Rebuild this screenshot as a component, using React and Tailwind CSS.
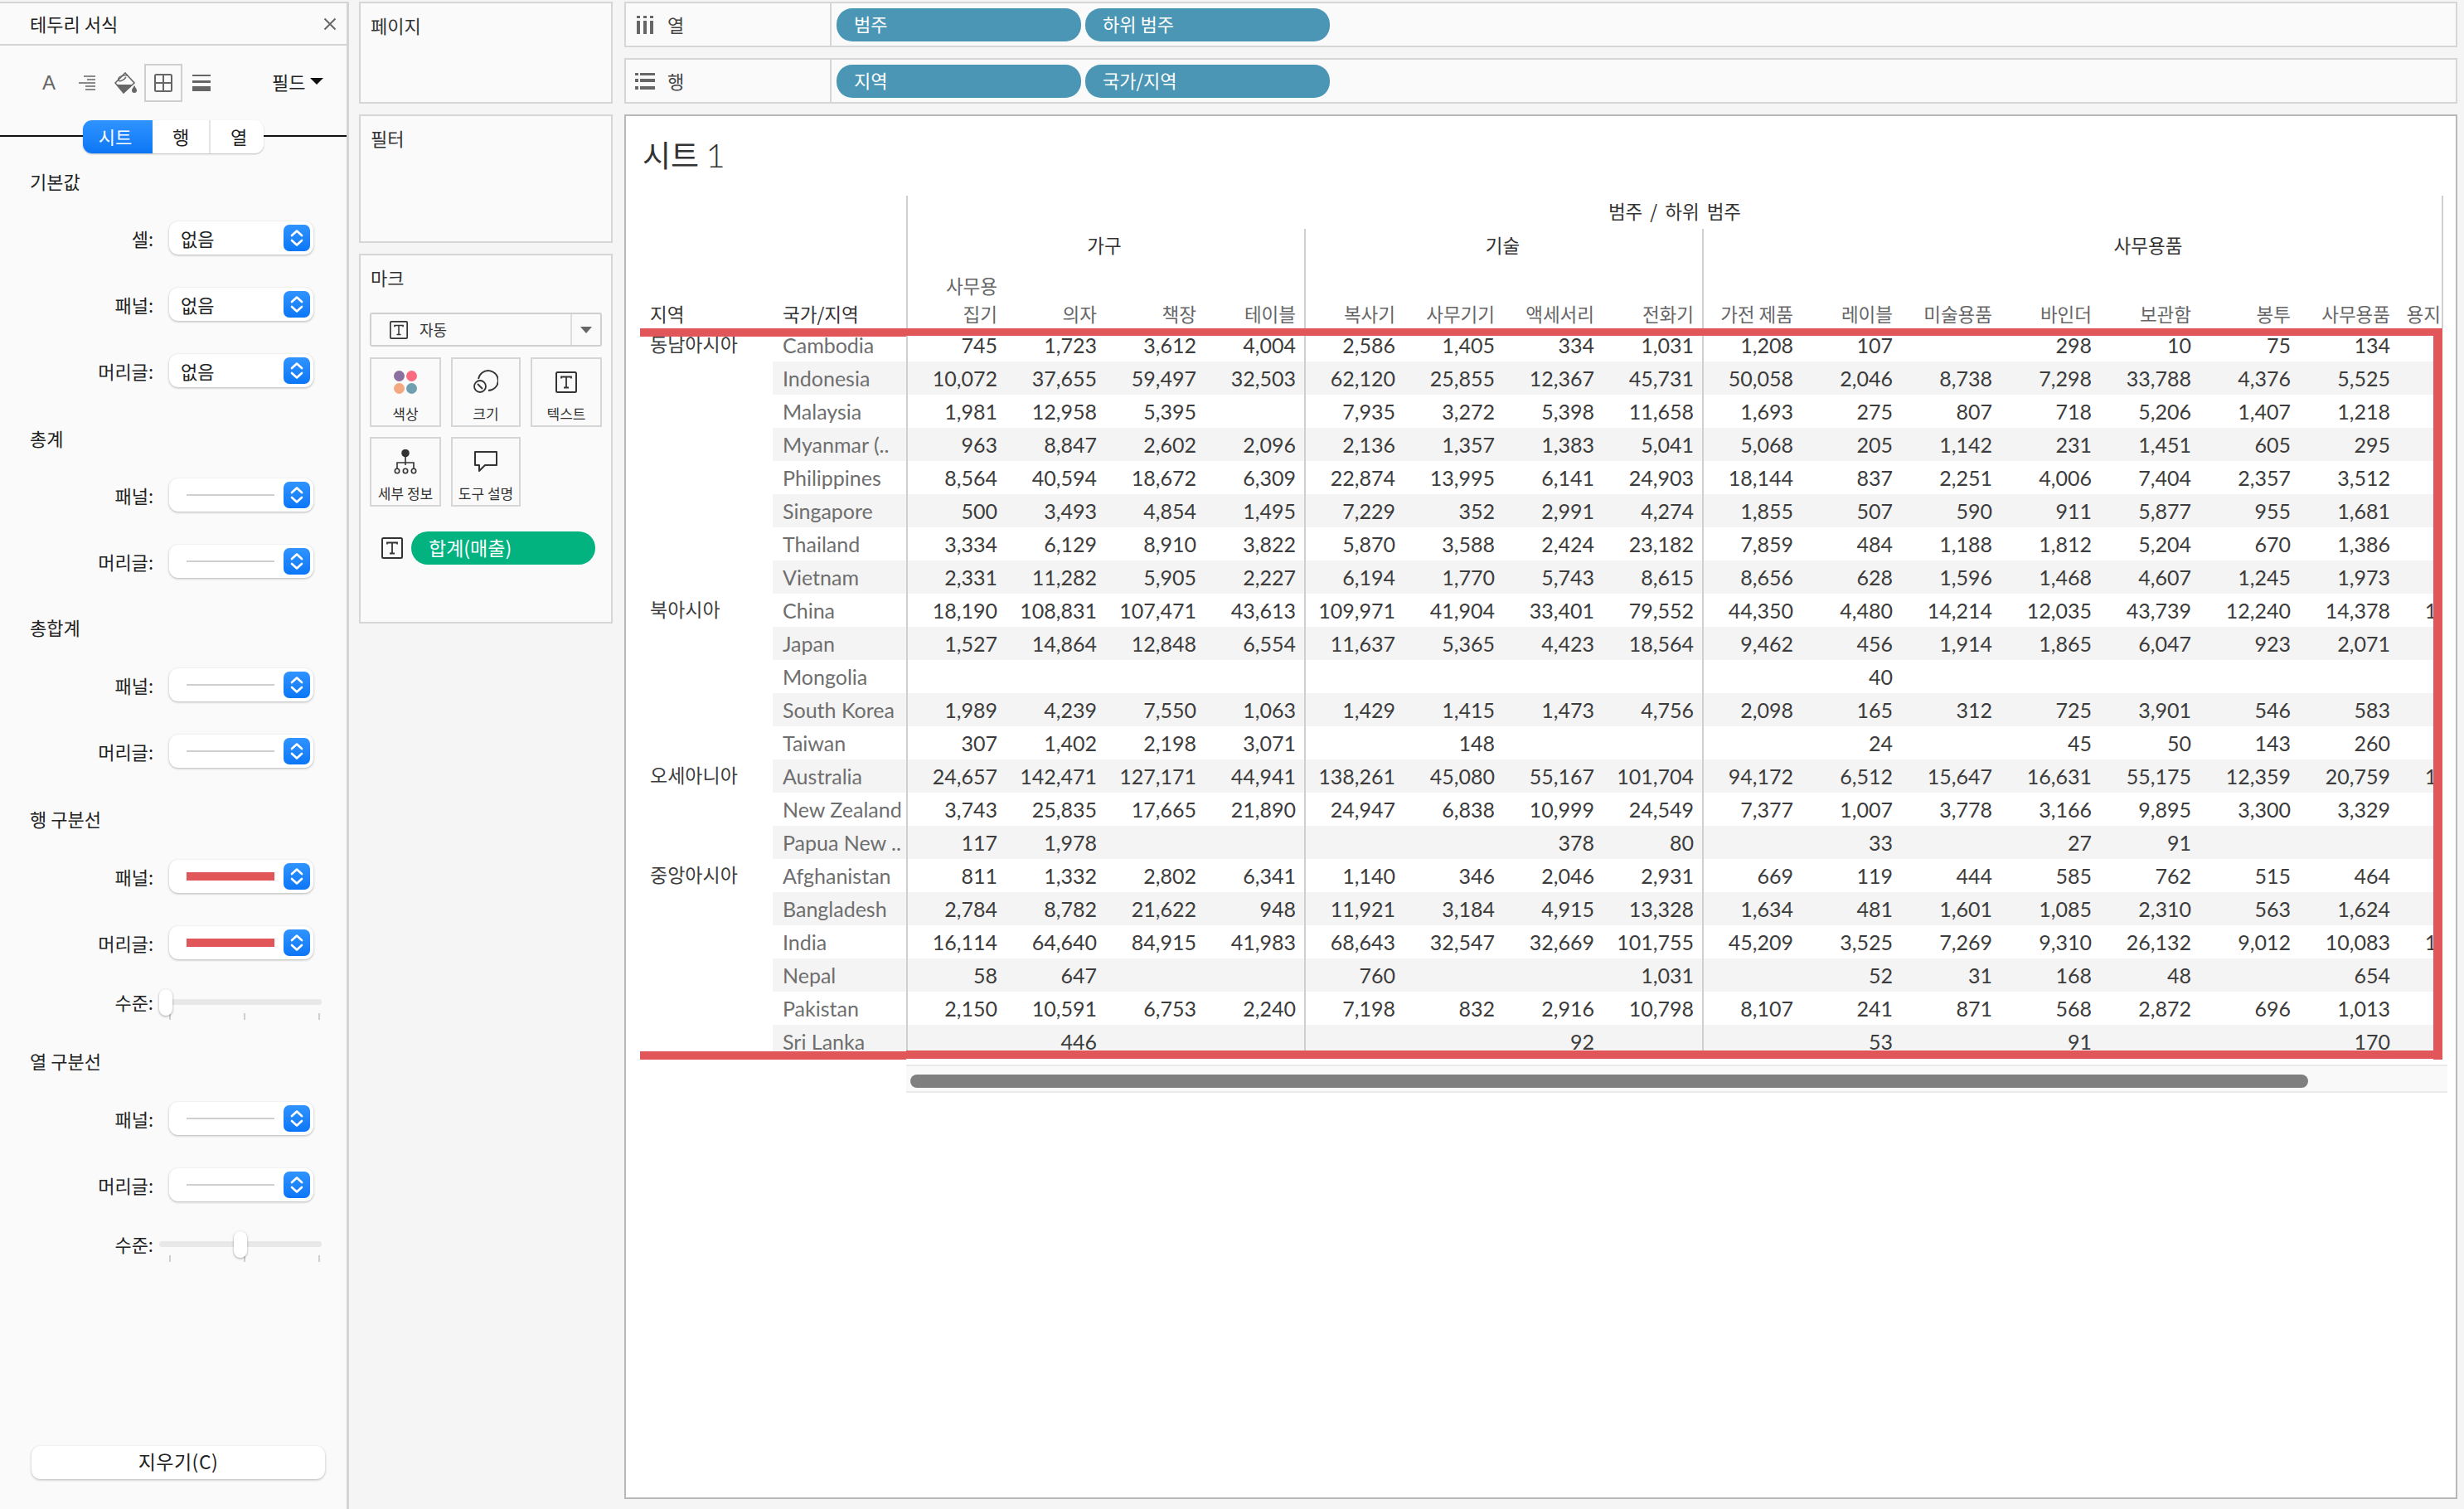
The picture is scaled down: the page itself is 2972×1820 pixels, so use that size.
const COLS = ["사무용\n집기", "의자", "책장", "테이블", "복사기", "사무기기", "액세서리", "전화기", "가전 제품", "레이블", "미술용품", "바인더", "보관함", "봉투", "사무용품"];

const ROWS = [
  ["동남아시아", "Cambodia", "745 1,723 3,612 4,004 2,586 1,405 334 1,031 1,208 107 - 298 10 75 134 -"],
  ["", "Indonesia", "10,072 37,655 59,497 32,503 62,120 25,855 12,367 45,731 50,058 2,046 8,738 7,298 33,788 4,376 5,525 5,100"],
  ["", "Malaysia", "1,981 12,958 5,395 - 7,935 3,272 5,398 11,658 1,693 275 807 718 5,206 1,407 1,218 -"],
  ["", "Myanmar (..", "963 8,847 2,602 2,096 2,136 1,357 1,383 5,041 5,068 205 1,142 231 1,451 605 295 -"],
  ["", "Philippines", "8,564 40,594 18,672 6,309 22,874 13,995 6,141 24,903 18,144 837 2,251 4,006 7,404 2,357 3,512 3,100"],
  ["", "Singapore", "500 3,493 4,854 1,495 7,229 352 2,991 4,274 1,855 507 590 911 5,877 955 1,681 1,100"],
  ["", "Thailand", "3,334 6,129 8,910 3,822 5,870 3,588 2,424 23,182 7,859 484 1,188 1,812 5,204 670 1,386 -"],
  ["", "Vietnam", "2,331 11,282 5,905 2,227 6,194 1,770 5,743 8,615 8,656 628 1,596 1,468 4,607 1,245 1,973 1,100"],
  ["북아시아", "China", "18,190 108,831 107,471 43,613 109,971 41,904 33,401 79,552 44,350 4,480 14,214 12,035 43,739 12,240 14,378 13,100"],
  ["", "Japan", "1,527 14,864 12,848 6,554 11,637 5,365 4,423 18,564 9,462 456 1,914 1,865 6,047 923 2,071 -"],
  ["", "Mongolia", "- - - - - - - - - 40 - - - - - -"],
  ["", "South Korea", "1,989 4,239 7,550 1,063 1,429 1,415 1,473 4,756 2,098 165 312 725 3,901 546 583 -"],
  ["", "Taiwan", "307 1,402 2,198 3,071 - 148 - - - 24 - 45 50 143 260 -"],
  ["오세아니아", "Australia", "24,657 142,471 127,171 44,941 138,261 45,080 55,167 101,704 94,172 6,512 15,647 16,631 55,175 12,359 20,759 13,100"],
  ["", "New Zealand", "3,743 25,835 17,665 21,890 24,947 6,838 10,999 24,549 7,377 1,007 3,778 3,166 9,895 3,300 3,329 3,100"],
  ["", "Papua New ..", "117 1,978 - - - - 378 80 - 33 - 27 91 - - -"],
  ["중앙아시아", "Afghanistan", "811 1,332 2,802 6,341 1,140 346 2,046 2,931 669 119 444 585 762 515 464 -"],
  ["", "Bangladesh", "2,784 8,782 21,622 948 11,921 3,184 4,915 13,328 1,634 481 1,601 1,085 2,310 563 1,624 1,100"],
  ["", "India", "16,114 64,640 84,915 41,983 68,643 32,547 32,669 101,755 45,209 3,525 7,269 9,310 26,132 9,012 10,083 13,100"],
  ["", "Nepal", "58 647 - - 760 - - 1,031 - 52 31 168 48 - 654 -"],
  ["", "Pakistan", "2,150 10,591 6,753 2,240 7,198 832 2,916 10,798 8,107 241 871 568 2,872 696 1,013 -"],
  ["", "Sri Lanka", "- 446 - - - - 92 - - 53 - 91 - - 170 -"],
];

function Stepper() {
  return (
    <div className="w-[32px] h-[32px] rounded-[7px] bg-gradient-to-b from-[#2f94ff] to-[#0a76f6] flex items-center justify-center">
      <svg width="20" height="24" viewBox="0 0 20 24" fill="none" stroke="white" strokeWidth="2.6" strokeLinecap="round" strokeLinejoin="round">
        <path d="M4 9 L10 3.5 L16 9" />
        <path d="M4 15 L10 20.5 L16 15" />
      </svg>
    </div>
  );
}

function Select({ label, value, line }) {
  return (
    <div className="h-[80px] flex items-center">
      <div className="w-[185px] text-right text-[22px] text-[#222]">{label}:</div>
      <div className="ml-[19px] w-[174px] h-[40px] bg-white rounded-[11px] shadow-[0_1px_3px_rgba(0,0,0,0.28)] flex items-center justify-between pr-[4px]">
        {value && <span className="pl-[14px] text-[22px] text-[#222]">{value}</span>}
        {line === "none" && <span className="ml-[21px] w-[106px] h-[2px] bg-[#cfcfcf]" />}
        {line === "red" && <span className="ml-[21px] w-[106px] h-[10px] bg-[#e15759]" />}
        <Stepper />
      </div>
    </div>
  );
}

function Level({ thumb }) {
  return (
    <div className="h-[64px] flex items-center">
      <div className="w-[185px] text-right text-[22px] text-[#222] pb-[2px]">수준:</div>
      <div className="relative ml-[7px] w-[196px] h-[32px]">
        <div className="absolute left-0 right-0 top-[12px] h-[7px] rounded-full bg-[#e8e8e8]" />
        <div className="absolute top-[29px] left-[12px] w-[2px] h-[8px] bg-[#cfcfcf]" />
        <div className="absolute top-[29px] left-[102px] w-[2px] h-[8px] bg-[#cfcfcf]" />
        <div className="absolute top-[29px] left-[192px] w-[2px] h-[8px] bg-[#cfcfcf]" />
        <div className={`absolute top-0 ${thumb} w-[16px] h-[32px] rounded-[8px] bg-white shadow-[0_1px_3px_rgba(0,0,0,0.35)]`} />
      </div>
    </div>
  );
}

function SectionTitle({ children, className }) {
  return <div className={`h-[40px] pl-[36px] pb-[3px] flex items-center text-[22px] text-[#222] ${className}`}>{children}</div>;
}

function TIcon({ size = 26 }) {
  return (
    <svg width={size} height={size} viewBox="0 0 26 26" fill="none" stroke="#333" strokeWidth="2">
      <rect x="1" y="1" width="24" height="24" rx="1.5" />
      <path d="M7 8.5 V6.5 H19 V8.5 M13 6.5 V19.5 M10 19.5 H16" strokeWidth="1.8" />
    </svg>
  );
}

function MarkButton({ icon, label, className }) {
  return (
    <div className={`h-[84px] border-2 border-[#d6d6d6] flex flex-col items-center pt-[14px] ${className}`}>
      <div className="h-[28px] flex items-center justify-center">{icon}</div>
      <div className="mt-[14px] text-[17px] leading-[20px] text-[#333] whitespace-nowrap">{label}</div>
    </div>
  );
}

function FormatPanel() {
  return (
    <div className="w-[421px] h-[1818px] shrink-0 bg-[#fafafa] border-t-2 border-r-[3px] border-[#d4d4d4] flex flex-col">
      <div className="h-[51px] shrink-0 border-b-2 border-[#d4d4d4] flex items-center justify-between pl-[36px] pr-[12px]">
        <span className="text-[22px] text-[#222]">테두리 서식</span>
        <svg width="16" height="16" viewBox="0 0 16 16" stroke="#666" strokeWidth="2" fill="none">
          <path d="M1.5 1.5 L14.5 14.5 M14.5 1.5 L1.5 14.5" />
        </svg>
      </div>

      <div className="h-[90px] shrink-0 flex items-center pl-[52px]">
        <span className="w-[14px] text-[24px] leading-none text-[#666] font-['Liberation_Sans',sans-serif] flex justify-center">A</span>
        <svg className="ml-[29px]" width="20" height="18" viewBox="0 0 20 18" stroke="#666" strokeWidth="1.6">
          <path d="M6 1 H20 M10 5 H20 M0 9 H20 M8 13 H20 M8 17 H20" />
        </svg>
        <svg className="ml-[23px]" width="28" height="26" viewBox="0 0 28 26" fill="none">
          <path d="M1 13 L13 1 L24 13 L11 25 Z" stroke="#666" strokeWidth="1.6" />
          <path d="M3 15 H22 L11 25 Z" fill="#666" />
          <path d="M16 4 C8 3 3 7 5 10 C7 12 12 9 14 6" stroke="#666" strokeWidth="1.4" />
          <path d="M24 16 C25.5 19 27 20 27 22 A3 3 0 0 1 21 22 C21 20 22.5 19 24 16 Z" fill="#666" />
        </svg>
        <div className="ml-[8px] w-[46px] h-[46px] border-2 border-[#cfcfcf] flex items-center justify-center">
          <svg width="22" height="22" viewBox="0 0 22 22" fill="none" stroke="#666" strokeWidth="2">
            <rect x="1" y="1" width="20" height="20" rx="1.5" />
            <path d="M11 1 V21 M1 11 H21" />
          </svg>
        </div>
        <svg className="ml-[12px]" width="22" height="20" viewBox="0 0 22 20" fill="#666">
          <rect x="0" y="0" width="22" height="2" />
          <rect x="0" y="7" width="22" height="3" />
          <rect x="0" y="14" width="22" height="6" />
        </svg>
        <span className="ml-[74px] mb-[4px] text-[22px] text-[#222]">필드</span>
        <span className="ml-[6px] mb-[4px] w-0 h-0 border-x-[8px] border-x-transparent border-t-[8px] border-t-[#111]" />
      </div>

      <div className="relative h-[40px] shrink-0 flex justify-center">
        <div className="absolute left-0 right-0 top-[18px] h-[2px] bg-[#111]" />
        <div className="relative flex w-[218px] rounded-[11px] overflow-hidden bg-white shadow-[0_1px_2px_rgba(0,0,0,0.25)] text-[22px] text-[#222]">
          <div className="w-[84px] pr-[6px] pb-[2px] flex items-center justify-center text-white bg-gradient-to-b from-[#2f94ff] to-[#0a76f6]">시트</div>
          <div className="w-[68px] pb-[2px] flex items-center justify-center">행</div>
          <div className="w-[66px] pl-[4px] pb-[2px] flex items-center justify-center border-l-2 border-[#e4e4e4]">열</div>
        </div>
      </div>

      <SectionTitle className="mt-[15px]">기본값</SectionTitle>
      <div className="mt-[7px]">
        <Select label="셀" value="없음" />
        <Select label="패널" value="없음" />
        <Select label="머리글" value="없음" />
      </div>

      <SectionTitle className="mt-[23px]">총계</SectionTitle>
      <div className="mt-[7px]">
        <Select label="패널" line="none" />
        <Select label="머리글" line="none" />
      </div>

      <SectionTitle className="mt-[21px]">총합계</SectionTitle>
      <div className="mt-[8px]">
        <Select label="패널" line="none" />
        <Select label="머리글" line="none" />
      </div>

      <SectionTitle className="mt-[23px]">행 구분선</SectionTitle>
      <div className="mt-[8px]">
        <Select label="패널" line="red" />
        <Select label="머리글" line="red" />
        <Level thumb="left-0" />
      </div>

      <SectionTitle className="mt-[20px]">열 구분선</SectionTitle>
      <div className="mt-[8px]">
        <Select label="패널" line="none" />
        <Select label="머리글" line="none" />
        <Level thumb="left-[90px]" />
      </div>

      <div className="flex-1" />
      <div className="ml-[38px] mb-[36px] w-[354px] h-[40px] pb-[4px] rounded-[11px] bg-white shadow-[0_1px_3px_rgba(0,0,0,0.28)] flex items-center justify-center text-[23px] tracking-[0.5px] text-[#222]">
        지우기(C)
      </div>
    </div>
  );
}

function CardsPanel() {
  return (
    <div className="ml-[12px] w-[306px] shrink-0 flex flex-col gap-[13px] text-[22px] text-[#333]">
      <div className="h-[123px] border-2 border-[#d6d6d6] bg-[#fafafa] px-[12px] pt-[12px] leading-[28px]">페이지</div>
      <div className="h-[155px] border-2 border-[#d6d6d6] bg-[#fafafa] px-[12px] pt-[12px] leading-[28px]">필터</div>
      <div className="h-[446px] border-2 border-[#d6d6d6] bg-[#fafafa] px-[11px] pt-[12px]">
        <div className="pl-[1px] leading-[28px]">마크</div>
        <div className="mt-[29px] h-[41px] w-[280px] border-2 border-[#d0d0d0] rounded-[3px] flex items-center">
          <div className="flex-1 flex items-center pl-[22px]">
            <TIcon size={22} />
            <span className="ml-[14px] text-[18px]">자동</span>
          </div>
          <div className="w-[36px] h-full border-l-2 border-[#dedede] flex items-center justify-center">
            <span className="w-0 h-0 border-x-[7px] border-x-transparent border-t-[8px] border-t-[#666]" />
          </div>
        </div>
        <div className="mt-[13px] flex gap-[12px]">
          <MarkButton
            className="w-[86px]"
            label="색상"
            icon={
              <svg width="30" height="30" viewBox="0 0 30 30">
                <circle cx="7.5" cy="7.5" r="6.5" fill="#8b6f9f" />
                <circle cx="22.5" cy="7.5" r="6.5" fill="#fb6b80" />
                <circle cx="7.5" cy="22.5" r="6.5" fill="#f2a880" />
                <circle cx="22.5" cy="22.5" r="6.5" fill="#6f9fb0" />
              </svg>
            }
          />
          <MarkButton
            className="w-[84px]"
            label="크기"
            icon={
              <svg width="30" height="30" viewBox="0 0 30 30" fill="none" stroke="#333" strokeWidth="1.8">
                <path d="M6 11 A12 12 0 1 1 18 25" />
                <circle cx="8" cy="20" r="7" />
                <path d="M5 17 L11 23" />
              </svg>
            }
          />
          <MarkButton className="w-[86px]" label="텍스트" icon={<TIcon />} />
        </div>
        <div className="mt-[12px] flex gap-[12px]">
          <MarkButton
            className="w-[86px]"
            label="세부 정보"
            icon={
              <svg width="28" height="30" viewBox="0 0 28 30" fill="none" stroke="#333" strokeWidth="1.6">
                <circle cx="14" cy="4.5" r="4" fill="#333" />
                <path d="M14 8 V19 M4 23 V16 H24 V23" />
                <circle cx="4" cy="26" r="2.7" />
                <circle cx="14" cy="26" r="2.7" />
                <circle cx="24" cy="26" r="2.7" />
              </svg>
            }
          />
          <MarkButton
            className="w-[84px]"
            label="도구 설명"
            icon={
              <svg width="30" height="28" viewBox="0 0 30 28" fill="none" stroke="#333" strokeWidth="2">
                <path d="M2 2 H28 V18 H14 L7 25 V18 H2 Z" strokeLinejoin="round" />
              </svg>
            }
          />
        </div>
        <div className="mt-[30px] pl-[14px] flex items-center">
          <TIcon />
          <div className="ml-[10px] w-[222px] h-[40px] pb-[2px] rounded-full bg-[#02b27f] text-white text-[23px] flex items-center pl-[21px]">합계(매출)</div>
        </div>
      </div>
    </div>
  );
}

function Shelf({ icon, label, pills }) {
  return (
    <div className="h-[55px] border-2 border-[#d6d6d6] bg-[#fafafa] flex">
      <div className="w-[248px] border-r-2 border-[#d6d6d6] flex items-center pl-[11px]">
        <div className="w-[39px] flex">{icon}</div>
        <span className="text-[22px] text-[#444]">{label}</span>
      </div>
      <div className="flex items-center gap-[5px] pl-[6px]">
        {pills.map((p) => (
          <div key={p} className="w-[295px] h-[40px] pb-[2px] rounded-[19px] bg-[#4a96b4] text-white text-[22px] flex items-center pl-[21px]">{p}</div>
        ))}
      </div>
    </div>
  );
}

function Crosstab() {
  return (
    <div className="relative ml-[17px] w-[2175px] font-['Lato','Noto_Sans_CJK_KR',sans-serif]">
      <div className="w-[2175px] h-[160px] overflow-hidden border-r-2 border-[#d0d0d0] flex text-[22.5px] font-['Noto_Sans_CJK_KR',sans-serif]">
        <div className="w-[321px] shrink-0 flex items-end text-[#333] leading-[34px] pb-[1px]">
          <div className="w-[160px] pl-[12px]">지역</div>
          <div className="pl-[12px]">국가/지역</div>
        </div>
        <div className="w-[2040px] shrink-0 flex flex-col">
          <div className="w-[1852px] h-[40px] pb-[3px] border-l-2 border-[#d0d0d0] flex items-center justify-center text-[#333] [word-spacing:4px]">범주 / 하위 범주</div>
          <div className="h-[42px] flex text-[#333] text-center leading-[38px]">
            <div className="w-[480px] pr-[4px] border-l-2 border-[#d0d0d0]">가구</div>
            <div className="w-[480px] pr-[3px] border-l-2 border-[#d0d0d0]">기술</div>
            <div className="w-[1080px] pr-[6px] border-l-2 border-[#d0d0d0]">사무용품</div>
          </div>
          <div className="h-[78px] flex items-end text-[#666] leading-[34px]">
            {COLS.map((c, i) => (
              <div key={c} className={`w-[120px] h-full shrink-0 pr-[10px] pb-[1px] flex flex-col justify-end text-right whitespace-nowrap ${i % 4 === 0 && i < 9 ? "border-l-2 border-[#d0d0d0]" : ""}`}>
                {c.split("\n").map((t) => <div key={t}>{t}</div>)}
              </div>
            ))}
            <div className="w-[120px] h-full shrink-0 pr-[69px] pb-[1px] flex flex-col justify-end text-right whitespace-nowrap">용지</div>
          </div>
        </div>
      </div>

      <div className="w-[2174px] overflow-hidden">
        {ROWS.map(([region, country, values], r) => (
          <div key={country} className="w-[2361px] h-[40px] flex leading-[40px] text-[25px] text-[#3c3c3c]">
            <div className="w-[160px] shrink-0 pl-[12px] text-[23px] leading-[38px]">{region}</div>
            <div className={`flex ${r % 2 === 1 ? "bg-[#f4f4f4]" : ""}`}>
              <div className="w-[161px] shrink-0 pl-[12px] text-[#6e6e6e] whitespace-nowrap">{country}</div>
              {values.split(" ").map((v, i) => (
                <div key={i} className={`w-[120px] shrink-0 pr-[10px] text-right ${i % 4 === 0 && i < 9 ? "border-l-2 border-[#d0d0d0]" : ""}`}>
                  {v === "-" ? "" : v}
                </div>
              ))}
            </div>
          </div>
        ))}
      </div>

      <div className="mt-[8px] ml-[321px] w-[1859px] h-[34px] bg-[#f9f9f9] border-y-2 border-[#eaeaea] flex items-start pl-[5px] pt-[10px]">
        <div className="w-[1686px] h-[16px] rounded-[8px] bg-[#7f7f7f]" />
      </div>

      <div className="absolute left-0 top-[160px] w-[321px] h-[10px] bg-[#e15759]" />
      <div className="absolute left-[321px] top-[160px] w-[1853px] h-[9px] bg-[#e15759]" />
      <div className="absolute left-0 top-[1032px] w-[321px] h-[10px] bg-[#e15759]" />
      <div className="absolute left-[321px] top-[1031px] w-[1853px] h-[10px] bg-[#e15759]" />
      <div className="absolute left-[2163px] top-[160px] w-[11px] h-[882px] bg-[#e15759]" />
    </div>
  );
}

export default function App() {
  return (
    <div className="w-[2972px] h-[1820px] overflow-hidden bg-[#f5f5f5] pt-[2px] flex items-start font-['Noto_Sans_CJK_KR',sans-serif]">
      <FormatPanel />
      <CardsPanel />
      <div className="ml-[14px] w-[2211px] shrink-0 flex flex-col">
        <Shelf
          label="열"
          pills={["범주", "하위 범주"]}
          icon={
            <svg width="24" height="24" viewBox="0 0 24 24" fill="#666" className="ml-[2px]">
              <rect x="0" y="1" width="4" height="3" />
              <rect x="8" y="1" width="4" height="3" />
              <rect x="16" y="1" width="4" height="3" />
              <rect x="0" y="7" width="4" height="16" />
              <rect x="8" y="7" width="4" height="16" />
              <rect x="16" y="7" width="4" height="16" />
            </svg>
          }
        />
        <div className="h-[13px]" />
        <Shelf
          label="행"
          pills={["지역", "국가/지역"]}
          icon={
            <svg width="24" height="22" viewBox="0 0 24 22" fill="#666">
              <rect x="0" y="1" width="4" height="3" />
              <rect x="6" y="1" width="18" height="3" />
              <rect x="0" y="8" width="4" height="4" />
              <rect x="6" y="8" width="18" height="4" />
              <rect x="0" y="17" width="4" height="4" />
              <rect x="6" y="17" width="18" height="4" />
            </svg>
          }
        />
        <div className="h-[13px]" />
        <div className="h-[1670px] border-2 border-[#b8b8b8] bg-white">
          <div className="h-[96px] pl-[20px] pt-[26px] text-[37px] leading-[40px] text-[#333]">
            시트 <span className="font-['Lato',sans-serif] font-light text-[40px]">1</span>
          </div>
          <Crosstab />
        </div>
      </div>
    </div>
  );
}
